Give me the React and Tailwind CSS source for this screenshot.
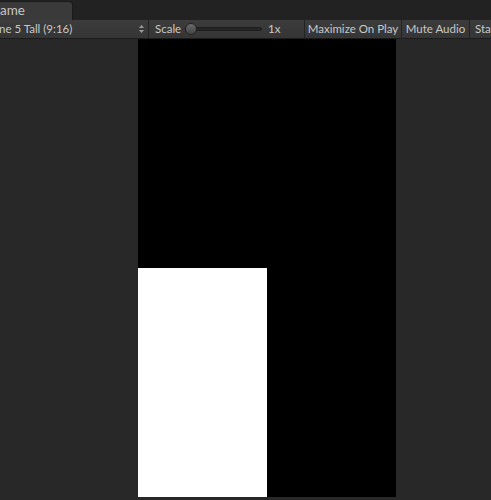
import React from 'react';

const font = { fontFamily: 'Lato, "Open Sans", sans-serif' };

const Sep = () => <div className="w-px shrink-0 self-stretch bg-[#232323]" />;

export default function App() {
  return (
    <div className="w-[491px] h-[500px] overflow-hidden bg-[#282828] flex flex-col text-[#c8c8c8]" style={font}>
      {/* tab strip */}
      <div className="h-[20px] bg-[#222222] flex items-end shrink-0">
        <div className="h-[19px] w-[73px] bg-[#3a3a3a] rounded-tr-[4px] border-r border-t border-[#1a1a1a] flex items-center text-[13.5px] leading-none text-[#c4c4c4]">
          ame
        </div>
      </div>

      {/* toolbar */}
      <div className="h-[19px] shrink-0 overflow-hidden bg-gradient-to-b from-[#3c3c3c] to-[#353535] border-b border-[#1c1c1c] flex items-center text-[11.5px] whitespace-nowrap">
        <div className="w-[148px] shrink-0 h-full flex items-center justify-between pr-[2px]">
          <span className="-ml-[1px]">ne 5 Tall (9:16)</span>
          <svg width="7" height="10" viewBox="0 0 7 10" className="mr-[1px]">
            <path d="M3.5 1 L6 4 H1 Z" fill="#9a9a9a" />
            <path d="M3.5 9 L6 6 H1 Z" fill="#9a9a9a" />
          </svg>
        </div>
        <Sep />
        <div className="w-[155px] shrink-0 h-full flex items-center pl-[6px]">
          <span className="w-[30px]">Scale</span>
          <div className="relative w-[77px] h-[12px] flex items-center">
            <div className="w-full h-[4px] rounded-full bg-[#262626] border border-[#1e1e1e]" />
            <div className="absolute left-0 top-0 w-[12px] h-[12px] rounded-full bg-gradient-to-b from-[#6a6a6a] to-[#454545] border border-[#222]" />
          </div>
          <span className="ml-[6px]">1x</span>
        </div>
        <Sep />
        <div className="w-[96px] shrink-0 h-full flex items-center justify-center">Maximize On Play</div>
        <Sep />
        <div className="w-[67px] shrink-0 h-full flex items-center justify-center">Mute Audio</div>
        <Sep />
        <div className="pl-[5px] shrink-0 h-full flex items-center">Stats</div>
      </div>

      {/* game view */}
      <div className="flex-1 flex pl-[138px]">
        <div className="w-[258px] h-[458px] bg-black flex flex-col justify-end">
          <div className="w-[129px] h-[229px] bg-white" />
        </div>
      </div>
    </div>
  );
}
